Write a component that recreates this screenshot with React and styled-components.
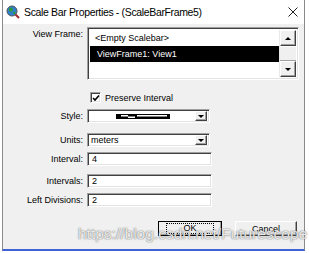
import styled, { createGlobalStyle } from "styled-components"

const Global = createGlobalStyle`
    html, body { margin: 0; padding: 0; background: #ffffff; }
    body { font-family: "Liberation Sans", Arial, sans-serif; }
`

const Window = styled.div`
    position: relative;
    margin-left: 2px;
    width: 301px;
    height: 249px;
    border-left: 1px solid #8a8a8a;
    border-right: 1px solid #8a8a8a;
    border-bottom: 2px solid #3f63d4;
    background: #f0f0f0;
    display: flex;
    flex-direction: column;
`

const TitleBar = styled.div`
    height: 24px;
    background: #ffffff;
    display: flex;
    align-items: center;
    padding-left: 3px;
    gap: 4px;
    font-family: "Liberation Sans", Arial, sans-serif;
    font-size: 10.5px;
    letter-spacing: -0.35px;
    color: #000;
`

const Title = styled.span`
    flex: 1;
    white-space: nowrap;
`

const Close = styled.div`
    width: 20px;
    display: flex;
    justify-content: center;
    align-items: center;
    margin-right: 1px;
`

const Body = styled.div`
    flex: 1;
    display: flex;
    flex-direction: column;
    padding-top: 3px;
    font-size: 9px;
    color: #000;
`

const Row = styled.div`
    display: flex;
    align-items: ${p => p.$top ? "flex-start" : "center"};
    gap: 4px;
    margin-top: ${p => p.$mt || 0}px;
`

const Label = styled.div`
    width: 80px;
    text-align: right;
    padding-top: ${p => p.$pt || 0}px;
    white-space: nowrap;
`

const Sunken = styled.div`
    box-sizing: border-box;
    background: #ffffff;
    border-top: 1px solid #a0a0a0;
    border-left: 1px solid #a0a0a0;
    border-right: 1px solid #ffffff;
    border-bottom: 1px solid #ffffff;
    box-shadow: inset 1px 1px 0 #404040, inset -1px -1px 0 #e3e3e3;
`

const ListBox = styled(Sunken)`
    width: 212px;
    height: 53px;
    display: flex;
    padding: 2px;
`

const Items = styled.div`
    flex: 1;
    display: flex;
    flex-direction: column;
`

const Item = styled.div`
    height: 16px;
    line-height: 16px;
    padding-left: ${p => p.$selected ? 7 : 5}px;
    background: ${p => p.$selected ? "#000" : "transparent"};
    color: ${p => p.$selected ? "#fff" : "#000"};
`

const ScrollBar = styled.div`
    width: 16px;
    display: flex;
    flex-direction: column;
    background: #f0f0f0;
    border-left: 1px solid #e8e8e8;
`

const Track = styled.div`
    flex: 1;
    border-top: 1px solid #ffffff;
    border-bottom: 1px solid #a0a0a0;
`

const Raised = styled.div`
    box-sizing: border-box;
    background: #f0f0f0;
    border-top: 1px solid #ffffff;
    border-left: 1px solid #ffffff;
    border-right: 1px solid #404040;
    border-bottom: 1px solid #404040;
    box-shadow: inset -1px -1px 0 #a0a0a0;
    display: flex;
    align-items: center;
    justify-content: center;
`

const ArrowBtn = styled(Raised)`
    width: ${p => p.$w || 16}px;
    height: ${p => p.$h || 16}px;
`

const Arrow = styled.div`
    width: 0;
    height: 0;
    border-left: 3px solid transparent;
    border-right: 3px solid transparent;
    ${p => p.$up ? "border-bottom: 3px solid #000;" : "border-top: 3px solid #000;"}
`

const CheckRow = styled.div`
    display: flex;
    align-items: center;
    gap: 4px;
    padding-left: 87px;
    margin-top: 12px;
`

const CheckBox = styled(Sunken)`
    width: 11px;
    height: 11px;
    display: flex;
    align-items: center;
    justify-content: center;
`

const Combo = styled(Sunken)`
    width: 123px;
    height: 14px;
    display: flex;
    align-items: center;
    padding: 2px 2px 2px 3px;
`

const ComboValue = styled.div`
    flex: 1;
    display: flex;
    align-items: center;
    justify-content: ${p => p.$center ? "center" : "flex-start"};
`

const Field = styled(Sunken)`
    width: 125px;
    height: 14px;
    line-height: 12px;
    padding-left: 4px;
`

const Buttons = styled.div`
    display: flex;
    gap: 13px;
    padding-left: 155px;
    margin-top: 14px;
`

const Button = styled(Raised)`
    width: ${p => p.$w}px;
    height: 15px;
    ${p => p.$default && "outline: 1px solid #000; outline-offset: -1px;"}
`

const Focus = styled.span`
    border: 1px dotted #000;
    padding: 0 16px;
    line-height: 9px;
`

const Watermark = styled.div`
    position: absolute;
    left: 75px;
    top: 225px;
    font-size: 15.5px;
    color: rgba(255, 255, 255, 0.85);
    text-shadow: 0 0 1px rgba(90, 90, 90, 0.9), 0 0 2px rgba(120, 120, 120, 0.6);
    white-space: nowrap;
`

function AppIcon(){
    return(
        <svg width="14" height="14" viewBox="0 0 14 14">
            <circle cx="6" cy="6" r="5" fill="#2f7fd0" />
            <path d="M3 3 L6 2.5 L7 5 L5 7 L3 6 Z" fill="#2f9a3a" />
            <path d="M7 7 L9.5 6.5 L9 9.5 L7.5 9 Z" fill="#2f9a3a" />
            <circle cx="6" cy="6" r="5" fill="none" stroke="#555" strokeWidth="1" />
            <line x1="9.5" y1="9.5" x2="13" y2="13" stroke="#a0282a" strokeWidth="2" />
        </svg>
    )
}

function ScalePattern(){
    return(
        <svg width="54" height="5" viewBox="0 0 54 5">
            <rect x="0" y="0" width="54" height="5" fill="#000" />
            <rect x="5" y="1" width="7" height="1.5" fill="#fff" />
            <rect x="12" y="2.5" width="7" height="1.5" fill="#fff" />
            <rect x="21" y="1" width="30" height="1.5" fill="#fff" />
        </svg>
    )
}

function Check(){
    return(
        <svg width="8" height="8" viewBox="0 0 8 8">
            <path d="M1 4 L3 6 L7 1.5" fill="none" stroke="#000" strokeWidth="1.6" />
        </svg>
    )
}

export default function App(){
    return(
        <>
            <Global />
            <Window>
                <TitleBar>
                    <AppIcon />
                    <Title>Scale Bar Properties - (ScaleBarFrame5)</Title>
                    <Close>
                        <svg width="10" height="10" viewBox="0 0 10 10">
                            <path d="M0.5 0.5 L9.5 9.5 M9.5 0.5 L0.5 9.5" stroke="#222" strokeWidth="1" />
                        </svg>
                    </Close>
                </TitleBar>
                <Body>
                    <Row $top>
                        <Label $pt={2}>View Frame:</Label>
                        <ListBox>
                            <Items>
                                <Item>&lt;Empty Scalebar&gt;</Item>
                                <Item $selected>ViewFrame1: View1</Item>
                            </Items>
                            <ScrollBar>
                                <ArrowBtn><Arrow $up /></ArrowBtn>
                                <Track />
                                <ArrowBtn><Arrow /></ArrowBtn>
                            </ScrollBar>
                        </ListBox>
                    </Row>
                    <CheckRow>
                        <CheckBox><Check /></CheckBox>
                        <span>Preserve Interval</span>
                    </CheckRow>
                    <Row $mt={6}>
                        <Label>Style:</Label>
                        <Combo>
                            <ComboValue $center><ScalePattern /></ComboValue>
                            <ArrowBtn $w={12} $h={10}><Arrow /></ArrowBtn>
                        </Combo>
                    </Row>
                    <Row $mt={10}>
                        <Label>Units:</Label>
                        <Combo>
                            <ComboValue>meters</ComboValue>
                            <ArrowBtn $w={12} $h={10}><Arrow /></ArrowBtn>
                        </Combo>
                    </Row>
                    <Row $mt={5}>
                        <Label>Interval:</Label>
                        <Field>4</Field>
                    </Row>
                    <Row $mt={8}>
                        <Label>Intervals:</Label>
                        <Field>2</Field>
                    </Row>
                    <Row $mt={5}>
                        <Label>Left Divisions:</Label>
                        <Field>2</Field>
                    </Row>
                    <Buttons>
                        <Button $w={64} $default><Focus>OK</Focus></Button>
                        <Button $w={62}>Cancel</Button>
                    </Buttons>
                </Body>
                <Watermark>https://blog.csdn.net/Futurescope</Watermark>
            </Window>
        </>
    )
}
